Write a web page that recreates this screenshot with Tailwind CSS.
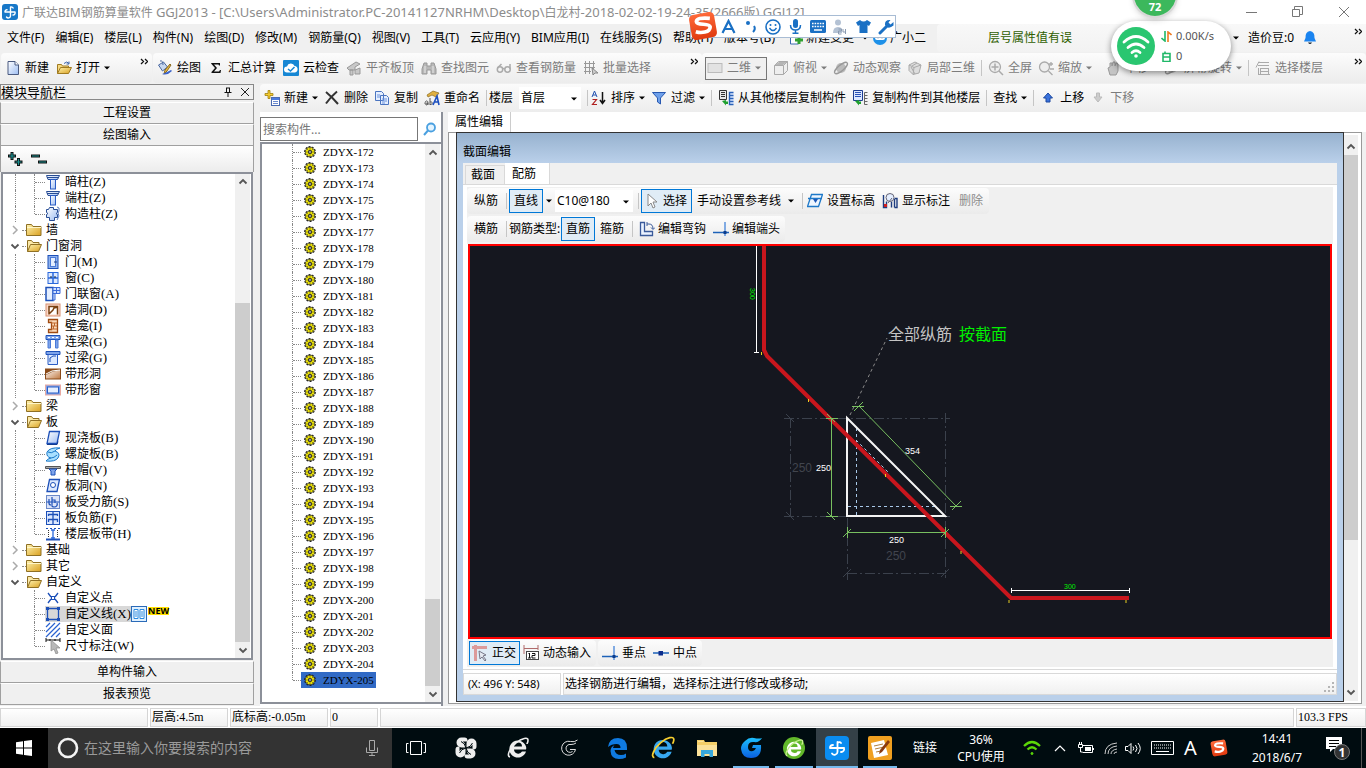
<!DOCTYPE html>
<html lang="zh-CN">
<head>
<meta charset="utf-8">
<title>广联达BIM钢筋算量软件 GGJ2013</title>
<script src="https://cdn.jsdelivr.net/npm/@tailwindcss/browser@4"></script>
</head>
<body class="h-screen flex flex-col overflow-hidden bg-[#f0f0f0] text-black text-[12px] leading-4 font-['Noto_Sans','Noto_Sans_CJK_SC',sans-serif] relative">

<svg class="absolute size-0" aria-hidden="true">
  <defs>
    <linearGradient id="gBlue" x1="0" y1="0" x2="1" y2="1"><stop offset="0" stop-color="#fff"/><stop offset="1" stop-color="#9dbdf2"/></linearGradient>
    <linearGradient id="gGold" x1="0" y1="0" x2="1" y2="1"><stop offset="0" stop-color="#fff3b0"/><stop offset="1" stop-color="#d9a020"/></linearGradient>
    <linearGradient id="gBrown" x1="0" y1="0" x2="1" y2="1"><stop offset="0" stop-color="#fff"/><stop offset="1" stop-color="#c07840"/></linearGradient>
    <linearGradient id="gRed" x1="0" y1="0" x2="0" y2="1"><stop offset="0" stop-color="#ff6a3a"/><stop offset="1" stop-color="#e03a10"/></linearGradient>
    <linearGradient id="gFlame" x1="0" y1="0" x2="0" y2="1"><stop offset="0" stop-color="#1cc0ff"/><stop offset="1" stop-color="#0a5fe0"/></linearGradient>
  </defs>
  <symbol id="app" viewBox="0 0 16 16"><rect width="16" height="16" rx="3" fill="#1878c8"/><g fill="none" stroke="#fff" stroke-width="1.4" stroke-linecap="round"><path d="M8.500 3v9a2.200 2.200 0 0 1-4 1M3 8h10M3 8a2 2 0 0 1 2-2.300M13 8a2.200 2.200 0 0 1-2 3M8.500 3.500a1.600 1.600 0 0 1 2.600.6"/></g></symbol>
  <symbol id="doc" viewBox="0 0 16 16"><path d="M3 1.5h7l3.500 3.500v9.500h-10.500z" fill="url(#gBlue)" stroke="#4a5a80"/><path d="M10 1.500v3.500h3.500" fill="#fff" stroke="#4a5a80"/></symbol>
  <symbol id="open" viewBox="0 0 16 16"><path d="M1.500 13.500v-9h4l1 1.500h6v2" fill="#f5d880" stroke="#a07a20"/><path d="M1.500 13.500l3-6h11l-3 6z" fill="url(#gGold)" stroke="#a07a20"/><path d="M8 3.500q3-3 5 0m0-2v2.500h-2.500" fill="none" stroke="#3a62a8"/></symbol>
  <symbol id="paint" viewBox="0 0 16 16"><path d="M1.500 5l5-3 4 5-5 4z" fill="#c8d8f0" stroke="#4a68a0"/><path d="M3 1q3-1 3 4" fill="none" stroke="#4a68a0"/><path d="M14 5l-4 6-3 3 1-4 5-6z" fill="#e8b840" stroke="#8a6a20"/><path d="M5 14q5 2 10-3l-1-1-6 3z" fill="#3a62c8"/></symbol>
  <symbol id="sigma" viewBox="0 0 16 16"><path d="M3 3h9v2.500h-1l-.5-1h-4.500l3 3.500-3 3.500h5l1-1.500h1l-.5 3h-9v-1l3.500-4-3.500-4z" fill="#111"/></symbol>
  <symbol id="cloud" viewBox="0 0 16 16"><rect width="16" height="16" rx="1" fill="#1787d4"/><path d="M4 12.500a3 3 0 0 1 0-6 4 4 0 0 1 7.600-.5 3.300 3.300 0 0 1 .4 6.500z" fill="#fff"/><path d="M5 9l2.500 2 4-4" fill="none" stroke="#1787d4" stroke-width="1.500"/></symbol>
  <symbol id="slab" viewBox="0 0 16 16"><path d="M1 8l9-6 4 2-5 3v3h-6zM4 10h3v5h-3zM9 10l5-2v6h-5z" fill="#c8c8c8" stroke="#999"/></symbol>
  <symbol id="binoc" viewBox="0 0 16 16"><path d="M3 3h3v3h4v-3h3l2 6v5h-5v-4h-4v4h-5v-5z" fill="#b8b8b8" stroke="#999"/><path d="M4 6v7M12 6v7" stroke="#e8e8e8"/></symbol>
  <symbol id="glass" viewBox="0 0 16 16"><g fill="none" stroke="#aaa" stroke-width="1.500"><circle cx="4" cy="9.500" r="2.700"/><circle cx="11.500" cy="9.500" r="2.700"/><path d="M6.700 9q1-1 2 0M1.500 8l4-4M14 9v-5"/></g></symbol>
  <symbol id="batch" viewBox="0 0 16 16"><path d="M1 3.500h11M1 7.500h11M1 11.500h7M2.500 1v13M6.500 1v13M10.500 1v8" stroke="#999" fill="none"/><path d="M9 8l6 5h-3l-2 2z" fill="#ccc" stroke="#888"/></symbol>
  <symbol id="plane" viewBox="0 0 16 16"><rect x="1" y="3.500" width="14" height="9" fill="#e2e2e2" stroke="#bbb"/></symbol>
  <symbol id="cube" viewBox="0 0 16 16"><path d="M1.500 5.500l4-4h9v9l-4 4h-9z" fill="#eee" stroke="#aaa"/><path d="M1.500 5.500h9v9M10.500 5.500l4-4" fill="none" stroke="#aaa"/><path d="M2 5l4-3h8l-4 3z" fill="#b5b5b5"/></symbol>
  <symbol id="orbit" viewBox="0 0 16 16"><circle cx="8" cy="8" r="5" fill="#bbb"/><ellipse cx="8" cy="8" rx="8" ry="2.800" transform="rotate(-40 8 8)" fill="none" stroke="#999" stroke-width="1.300"/></symbol>
  <symbol id="cube3" viewBox="0 0 16 16"><path d="M2 5l6-3 6 3-2 8-6 1.500-4-4z" fill="#ddd" stroke="#aaa"/><path d="M2 5l5 2.500 7-2.500M7 7.500l-1 7M4 7l4 7M10 3l-5 3" fill="none" stroke="#aaa"/></symbol>
  <symbol id="full" viewBox="0 0 16 16"><circle cx="7" cy="7" r="5.500" fill="#eee" stroke="#aaa" stroke-width="1.300"/><path d="M7 3.500v7M3.500 7h7M11 11l4 4" stroke="#aaa" stroke-width="1.500"/></symbol>
  <symbol id="zoom" viewBox="0 0 16 16"><circle cx="6.500" cy="7" r="5" fill="#eee" stroke="#aaa" stroke-width="1.300"/><path d="M10.500 11l4 4M11 4h4M13 2v4M12 9h4" stroke="#aaa" stroke-width="1.300"/></symbol>
  <symbol id="hand" viewBox="0 0 16 16"><path d="M3 8l2-1v-4h2v3l1-4h2v4l1-3h2v8l-2 4h-6z" fill="#c4c4c4" stroke="#999"/></symbol>
  <symbol id="floors" viewBox="0 0 16 16"><path d="M4 2.500h10M3 5.500h11M6 8.500h8M6 11.500h8M3 14.500h12M4 1.500l-3 6M3.500 8v7M5.500 8v7M13.500 8v7" stroke="#aaa" fill="none"/></symbol>
  <symbol id="new" viewBox="0 0 16 16"><rect x="7.500" y="7.500" width="8" height="8" fill="#fff" stroke="#4a6ab0"/><path d="M8 9h7" stroke="#4a7ae0" stroke-width="2"/><path d="M9 11.500h5M9 13.500h5" stroke="#6a8ad0"/><path d="M4 0.500h2v3h3v2h-3v3h-2v-3h-3v-2h3z" fill="#f5cc30" stroke="#a08010" stroke-width=".8"/></symbol>
  <symbol id="del" viewBox="0 0 16 16"><path d="M2 2q6 5 12 12M13 1.500q-6 5-11 12" stroke="#333" stroke-width="2" fill="none"/></symbol>
  <symbol id="copy" viewBox="0 0 16 16"><path d="M1.500 1.500h6l2 2v7h-8zM6.500 5.500h6l2 2v7h-8z" fill="#e4eeff" stroke="#4a74c0"/><path d="M8 9h5M8 11h5M8 13h3M3 5h3M3 7h3" stroke="#6a92dc"/></symbol>
  <symbol id="rename" viewBox="0 0 16 16"><path d="M3 5l6-4 6 2-3 4-4-2-4 2z" fill="#e0b040" stroke="#8a6a20" stroke-width=".7"/><path d="M1 14c0-4 3-4 3-1v2m0-2c-3 0-3 2-1 2zM6 8v7m0-3c3-1 3 3 0 2.500" stroke="#555" fill="none"/><path d="M9 15l4-9 2 9M10.500 12h4" stroke="#1d50c0" stroke-width="1.600" fill="none"/></symbol>
  <symbol id="sort" viewBox="0 0 16 16"><path d="M1 7l2.500-6 2.500 6M2 5h3" stroke="#2050b0" fill="none"/><path d="M1.500 9.500h4l-4 5h4.500" stroke="#b02020" fill="none" stroke-width="1.200"/><path d="M11.500 2v11M9 10l2.500 3.500 2.500-3.500" stroke="#111" fill="none" stroke-width="1.500"/></symbol>
  <symbol id="filter" viewBox="0 0 16 16"><path d="M1.500 2.500h13l-5 5.500v6l-3-2v-4z" fill="#6ea0ea" stroke="#2858b0"/></symbol>
  <symbol id="fcopy" viewBox="0 0 16 16"><path d="M1.500 0.500h7v9h-7z" fill="#e8e8e8" stroke="#333"/><path d="M3 2.500h4M3 4.500h4M3 6.500h4" stroke="#333"/><path d="M15.500 2.500h-4v12h4M11.500 5.500h4M11.500 8.500h4M11.500 11.500h4" stroke="#2a62b8" stroke-width="1.400" fill="#dce8ff"/><path d="M4 11l4-1v1.500h2v2.500h-2v1.500z" fill="#20a030"/></symbol>
  <symbol id="fcopy2" viewBox="0 0 16 16"><path d="M1.500 0.500h9v10h-9z" fill="#dce8ff" stroke="#1d3c90"/><path d="M3 2.500h6M3 4.500h6M3 6.500h6" stroke="#2a52b8"/><path d="M15.500 2.500h-3v12h3M12.500 5.500h3M12.500 8.500h3M12.500 11.500h3" stroke="#666" fill="none"/><path d="M3 11l4-1v1.500h2v2.500h-2v1.500z" fill="#20a030"/></symbol>
  <symbol id="up" viewBox="0 0 16 16"><path d="M8 3l4.500 5h-2.500v4h-4v-4h-2.500z" fill="#3a72dc" stroke="#1c48a0"/></symbol>
  <symbol id="down" viewBox="0 0 16 16"><path d="M8 12l4-5h-2.500v-4h-3v4h-2.500z" fill="#ccc" stroke="#bbb"/></symbol>
  <symbol id="folder" viewBox="0 0 16 14"><path d="M.5 12.500v-11h5l1.500 2h8v9z" fill="url(#gGold)" stroke="#8f7024"/><path d="M1 4.500h14" stroke="#fff6c8"/></symbol>
  <symbol id="folderO" viewBox="0 0 16 14"><path d="M1.500 12.500v-11h4l1.500 2h6v3" fill="#fbe9a8" stroke="#8f7024"/><path d="M1.500 12.500l3-7h11l-3 7z" fill="url(#gGold)" stroke="#8f7024"/></symbol>
  <symbol id="t-col" viewBox="0 0 16 16"><path d="M1.500 1.500h13l-2 4h-9.500z" fill="url(#gBlue)" stroke="#274c94"/><path d="M2 3.500h12" stroke="#274c94"/><rect x="5.500" y="5.500" width="5" height="9.500" fill="url(#gBlue)" stroke="#2a5cc4"/></symbol>
  <symbol id="t-gz" viewBox="0 0 16 16"><path d="M4.500 1.500h4v2h4v3l-1.500 1 1.500 1v3h-3v3h-5v-3h-3v-3l1.500-1-1.500-1v-3h2z" fill="url(#gBlue)" stroke="#274c94"/><path d="M12 1l2 1v3l-1 2 1 3-2 4" fill="none" stroke="#5a7cc0"/></symbol>
  <symbol id="t-door" viewBox="0 0 16 16"><rect x="3" y="1.500" width="10" height="13" fill="#8fb2ee" stroke="#1d50b8"/><rect x="5.500" y="3.500" width="5" height="9" fill="#e4eeff" stroke="#4a7ad8"/><path d="M9 8h3" stroke="#1d3c80"/></symbol>
  <symbol id="t-win" viewBox="0 0 16 16"><rect x="3" y="2.500" width="10" height="11" fill="#dce9ff" stroke="#2a68dc"/><path d="M8 2v12M3 8h10" stroke="#2a68dc" stroke-width="1.500"/><path d="M5 7h2M9 7h2" stroke="#123"/></symbol>
  <symbol id="t-dw" viewBox="0 0 16 16"><rect x="1" y="1.500" width="7" height="13" fill="#e4eeff" stroke="#1d50b8" stroke-width="1.500"/><path d="M8 1.500h7v6h-7zM11.500 1.500v6M8 4.500h7M8 8v6h2v-6" fill="#cfe0ff" stroke="#3a6ad8"/></symbol>
  <symbol id="t-wd" viewBox="0 0 16 16"><rect x="1" y="2" width="14" height="12" fill="#fbd9c8" stroke="#d89070"/><path d="M4 12.500v-8h8.500v8M4 12l4-4 1-2 4-1" fill="#fff" stroke="#7a4010" stroke-width="1.500"/></symbol>
  <symbol id="t-bk" viewBox="0 0 16 16"><path d="M3.500 1.500h9v13h-9v-3h3v-7h-3z" fill="#fbd9b8" stroke="#a04a10" stroke-width="1.300"/><path d="M6 5h6M7 8h5M6 11h6M9.500 5v3M8.500 8v3" stroke="#c06a30"/></symbol>
  <symbol id="t-ll" viewBox="0 0 16 16"><path d="M1 1.500h14v4h-14z" fill="#7ea4ea" stroke="#1d50b8"/><path d="M3 3.500h10" stroke="#fff" stroke-dasharray="2 2"/><path d="M3 6h2.500v8h-2.500zM10.500 6h2.500v8h-2.500z" fill="#7ea4ea" stroke="#4a7ad8"/></symbol>
  <symbol id="t-gl" viewBox="0 0 16 16"><path d="M1 1.500h14v3h-14z" fill="#7ea4ea" stroke="#1d50b8"/><path d="M3 4.500h9.500v10h-9.500z" fill="#dce9ff" stroke="#2a5cc4"/><path d="M5 12v-4l3-2 3 0" fill="none" stroke="#1d50b8"/></symbol>
  <symbol id="t-dd" viewBox="0 0 16 16"><rect x=".5" y="3" width="15" height="10" fill="url(#gBrown)" stroke="#8a4a18"/><path d="M1 9l6-3 8-2v-1h-14z" fill="#8a4a18"/><path d="M1 8l6-3 8-1" stroke="#fff" fill="none"/></symbol>
  <symbol id="t-dc" viewBox="0 0 16 16"><rect x=".5" y="3" width="15" height="10" fill="#7ea4ea" stroke="#e8a8a0"/><rect x="2.500" y="5" width="11" height="6" fill="#e4eeff" stroke="#2a5cc4"/></symbol>
  <symbol id="t-slab" viewBox="0 0 16 16"><path d="M4.500 1.500h10l-2.500 12h-10z" fill="url(#gBlue)" stroke="#1d50b8" stroke-width="1.300"/><path d="M2 14.500h10l1-3" stroke="#123c90" fill="none"/></symbol>
  <symbol id="t-sp" viewBox="0 0 16 16"><path d="M15 2q-4 1-5 3 6 2 3 7-3 4-12 3 1-2 5-3-5-1-4-6 3-5 13-4z" fill="#a8e0ff" stroke="#1b78c8"/><path d="M3 6q3 2 7-1M6 12q3 0 6-3" stroke="#1b78c8" fill="none"/></symbol>
  <symbol id="t-cap" viewBox="0 0 16 16"><path d="M.5 4.500h15v2h-15z" fill="#aaa" stroke="#555"/><path d="M4 7h8l-2 2v4h-4v-4z" fill="#7ea4ea" stroke="#1d50b8"/></symbol>
  <symbol id="t-hole" viewBox="0 0 16 16"><path d="M4.500 1.500h10l-2.500 12h-10z" fill="#dce9ff" stroke="#1d50b8" stroke-width="1.300"/><circle cx="8" cy="7" r="2.500" fill="#fff" stroke="#1d50b8"/></symbol>
  <symbol id="t-sl" viewBox="0 0 16 16"><rect x="1.500" y="1.500" width="13" height="13" fill="#dce4f8" stroke="#6a88c8"/><path d="M1.500 8h13M4 5v4q0 2 2 2M7 3v9q0 1 3 1 3-1 2-4M7 6h3v3" stroke="#1d50b8" fill="none" stroke-width="1.200"/></symbol>
  <symbol id="t-fj" viewBox="0 0 16 16"><rect x="1.500" y="1.500" width="13" height="13" fill="#dce9ff" stroke="#1d50b8"/><path d="M8 1.500v13M3.500 6v-1.500h9v1.500M3.500 12v-2.500h9v2.500" stroke="#1d50b8" fill="none" stroke-width="1.300"/></symbol>
  <symbol id="t-bd" viewBox="0 0 16 16"><path d="M1 2.500h14" stroke="#1d50b8" stroke-dasharray="2 2"/><path d="M1 13.500h14" stroke="#1d50b8" stroke-width="2"/><path d="M3.500 4v8M12.500 4v8" stroke="#333" stroke-dasharray="1 1"/><path d="M8 4v9M6 4h4M6 12h4" stroke="#2a68dc" stroke-width="1.300"/></symbol>
  <symbol id="t-pt" viewBox="0 0 16 16"><path d="M3 3l3 4M13 3l-3 4M3 13l3-4M13 13l-3-4" stroke="#1d50b8" stroke-width="1.300"/><rect x="6.500" y="6.500" width="3" height="3" fill="#fff" stroke="#1d50b8"/></symbol>
  <symbol id="t-ln" viewBox="0 0 16 16"><path d="M2.500 2.500h11v11h-11z" fill="none" stroke="#1d50b8" stroke-width="1.300"/><g fill="#1d50b8"><rect x="1" y="1" width="3" height="3"/><rect x="12" y="1" width="3" height="3"/><rect x="1" y="12" width="3" height="3"/><rect x="12" y="12" width="3" height="3"/></g></symbol>
  <symbol id="t-fa" viewBox="0 0 16 16"><path d="M1 5l4-4M1 10l9-9M1 15l14-14M6 15l9-9M11 15l4-4" stroke="#2a62d0" stroke-width="1.200"/></symbol>
  <symbol id="t-dim" viewBox="0 0 16 16"><path d="M1 0v4M15 0v4M1 2h14M5 1v2M10 1v2" stroke="#111"/><path d="M6 2v11l3-2 2 5 2-1-2-5h4z" fill="#b8b8b8" stroke="#888" stroke-width=".7"/></symbol>
  <symbol id="book" viewBox="0 0 16 16"><rect x=".5" y=".5" width="15" height="15" fill="#dff0ff" stroke="#2a6ab8"/><path d="M3 3.500h4v9h-4zM9 3.500h4v9h-4zM4 6h2M4 8h2M4 10h2M10 6h2M10 8h2M10 10h2" fill="#fff" stroke="#2a8ae0"/></symbol>
  <symbol id="gear" viewBox="0 0 12 12"><circle cx="6" cy="6" r="5.200" fill="none" stroke="#222" stroke-dasharray="2 1.200" stroke-width="1.400"/><circle cx="6" cy="6" r="4.700" fill="#f5ea00" stroke="#332" stroke-width=".7"/><path d="M6 1.500v9M1.500 6h9M3 3l6 6M9 3l-6 6" stroke="#443" stroke-width=".6"/><circle cx="6" cy="6" r="1.400" fill="#fff" stroke="#111"/></symbol>
  <symbol id="cursor" viewBox="0 0 16 16"><path d="M4 1v12l3-3 2 5 2-1-2-5h4z" fill="#fff" stroke="#888"/></symbol>
  <symbol id="elev" viewBox="0 0 16 16"><path d="M4.500 1.500h11l-4 12h-11zM1 5.500h14" fill="#eef6ff" stroke="#1d78c8" stroke-width="1.300"/><path d="M6 6h5l-2.500 4z" fill="#1d58b8"/></symbol>
  <symbol id="showd" viewBox="0 0 16 16"><path d="M1.500 2v12.500h3v-6M12.500 14.500v-9M9.500 14.500v-6M12.500 14.500h2.500v-9h-2" fill="none" stroke="#1d3c80" stroke-width="1.400"/><circle cx="8" cy="4.500" r="4" fill="#e4eeff" stroke="#667"/><path d="M6 10l4-5" stroke="#667"/><rect x="2" y="11" width="3" height="3" fill="#d02020"/></symbol>
  <symbol id="hook" viewBox="0 0 16 16"><path d="M1.500 1.500h4v9h8v4h-12z" fill="#eaf2ff" stroke="#3a5a9a" stroke-width="1.300"/><path d="M8 3h2q4 0 4 5M8 1v4M12 6.500l2 2 2-2" stroke="#3a5a9a" fill="none"/></symbol>
  <symbol id="perp" viewBox="0 0 16 16"><path d="M0 11.500h16" stroke="#1d62b8" stroke-width="1.500"/><path d="M12 1v14" stroke="#5a92dc" stroke-width="1.500"/><rect x="10.500" y="10" width="3" height="3" fill="#0c3c8c"/></symbol>
  <symbol id="mid" viewBox="0 0 16 16"><path d="M0 8h16" stroke="#1d62b8" stroke-width="1.500"/><rect x="5.500" y="6" width="4.500" height="4.500" fill="#0c2c8c"/></symbol>
  <symbol id="ortho" viewBox="0 0 16 16"><path d="M0 2.500h15M3.500 0v16" stroke="#dc9a9a" stroke-width="3"/><path d="M7 6l7 4-3 1 3 4-1 1-3-4-2 2z" fill="#e4e8f0" stroke="#778"/></symbol>
  <symbol id="dyn" viewBox="0 0 16 16"><path d="M1 0v9M15 0v5M1 3.500h14" stroke="#b06a6a"/><rect x="3.500" y="6.500" width="12" height="8" fill="#fff" stroke="#444"/><path d="M6.500 8v5M5.500 8.500h1M9 8.500h3v2h-3v2.500h3.500M5 13h3" stroke="#111" fill="none"/></symbol>
  <symbol id="sogou" viewBox="0 0 26 26"><g transform="rotate(-10 13 13)"><rect x="2" y="2" width="22" height="22" rx="4" fill="url(#gRed)"/><path d="M20 7.500q-11-3-12 .8c0 4 11 2.500 11 6.500-1 5-9 4-13 2" fill="none" stroke="#fff" stroke-width="3.200"/></g></symbol>
  <symbol id="chevU" viewBox="0 0 10 10"><path d="M1.500 6.500l3.500-3.500 3.500 3.500" fill="none" stroke="#555" stroke-width="1.800"/></symbol>
  <symbol id="chevD" viewBox="0 0 10 10"><path d="M1.500 3.500l3.500 3.500 3.500-3.500" fill="none" stroke="#555" stroke-width="1.800"/></symbol>
  <symbol id="chevR" viewBox="0 0 10 10"><path d="M3 1l4 4-4 4" fill="none" stroke="#aaa" stroke-width="1.500"/></symbol>
  <symbol id="caret" viewBox="0 0 6 4"><path d="M0 .5h6l-3 3z" fill="currentColor"/></symbol>
  <symbol id="more" viewBox="0 0 8 8"><path d="M1 1l2.500 2.500-2.500 2.500M5 1l2.500 2.500-2.500 2.500" fill="none" stroke="#111" stroke-width="1.300"/></symbol>
  <symbol id="ie" viewBox="0 0 24 24"><path d="M20 13.500h-12a4.300 4.300 0 0 0 8 2h4a8.500 8.500 0 1 1 .3-3.500zM8 10.500h8a4 4 0 0 0-8 0z" fill="currentColor" stroke="none"/><path d="M4 21c-4-1 0-9 6-14s12-6 12-3-1 3-1 4" fill="none" stroke-width="1.600"/></symbol>
  <symbol id="gld" viewBox="0 0 24 24"><path d="M20.500 4q-3 2.500-7 1.500a7 7 0 1 0 5 8h-5.500M19 7q-2 1.500-5 1.500a4 4 0 1 0 1.500 7" fill="none" stroke="currentColor"/></symbol>
</svg>

<header class="h-6 shrink-0 bg-white flex items-center pl-[2px] pr-4 text-[#8c8c8c]">
  <svg class="size-4 mr-1"><use href="#app"/></svg>
  <h1 class="grow whitespace-nowrap text-[12px]">广联达BIM钢筋算量软件 <span class="text-[13px]">GGJ2013 - [C:\Users\Administrator.PC-20141127NRHM\Desktop\</span>白龙村<span class="text-[13px]">-2018-02-02-19-24-35(2666</span>版<span class="text-[13px]">).GGJ12]</span></h1>
  <div class="flex gap-[34px] items-center">
    <button aria-label="最小化"><svg class="size-3" viewBox="0 0 12 12"><path d="M0 6.500h11" stroke="#777"/></svg></button>
    <button aria-label="还原"><svg class="size-3" viewBox="0 0 12 12"><path d="M.5 3.500h7v7h-7zM2.500 3v-2.500h8v8h-2.500" fill="none" stroke="#777"/></svg></button>
    <button aria-label="关闭"><svg class="size-3" viewBox="0 0 12 12"><path d="M1 1l10 10M11 1l-10 10" stroke="#777"/></svg></button>
  </div>
</header>

<div class="h-7 shrink-0 flex items-center whitespace-nowrap">
  <nav id="menu" class="w-[781px] pl-[7px] flex gap-[11px] shrink-0"></nav>
  <div class="w-[156px] pl-[7px] shrink-0 flex items-center">
    <button class="flex items-center gap-[2px]"><svg class="size-4" viewBox="0 0 16 16"><path d="M2.500 2v12h8" fill="#fff" stroke="#3a6ab0"/><path d="M11 6v8M7 10h8" stroke="#30a030" stroke-width="3"/></svg>新建变更<svg class="w-[6px] h-1 ml-[6px]"><use href="#caret"/></svg></button>
    <button class="flex items-center gap-[2px] ml-1"><svg class="size-4" viewBox="0 0 16 16"><circle cx="8" cy="8" r="7" fill="#1d90e8"/><rect x="3" y="5" width="10" height="5" rx="2" fill="#fff"/><path d="M5.500 7.500h1M9.500 7.500h1" stroke="#135" stroke-width="1.500"/></svg>广小二</button>
  </div>
  <div class="grow h-7 bg-gradient-to-b from-[#f8f8f8] to-[#f2f2f2] rounded-l flex items-center pl-[51px] pr-1">
    <span class="text-[#2f5f00] w-[245px]">层号属性值有误</span>
    <svg class="w-[6px] h-1 mr-[9px]"><use href="#caret"/></svg>
    <button class="w-[55px] text-left">造价豆:0</button>
    <svg class="size-[14px]" viewBox="0 0 14 14"><path d="M7 0q5 1 4.500 7l1.500 3.500h-12l1.500-3.500q-.5-6 4.500-7z" fill="#1a84f0"/><path d="M5 11.500h4q-2 3-4 0z" fill="#123"/></svg>
    <svg class="size-2 ml-auto mb-3"><use href="#more"/></svg>
  </div>
</div>

<div class="h-8 shrink-0 flex items-center whitespace-nowrap">
  <div id="tbFile" class="h-[30px] w-[151px] pl-1 pr-1 mx-px shrink-0 flex items-center gap-[7px] rounded bg-gradient-to-b from-[#fcfcfc] to-[#ececec]"></div>
  <div id="tbDraw" class="h-[30px] w-[549px] px-1 shrink-0 flex items-center gap-[7px] rounded bg-gradient-to-b from-[#fcfcfc] to-[#ececec]"></div>
  <div id="tbView" class="h-[30px] grow pl-[3px] pr-1 flex items-center gap-[6px] rounded bg-gradient-to-b from-[#fcfcfc] to-[#ececec] text-[#7c7c7c]"></div>
</div>

<main class="grow min-h-0 flex">
  <aside class="w-[254px] shrink-0 flex flex-col pb-px">
    <div class="h-4 mb-[2px] border border-[#888] flex items-center">
      <h2 class="grow text-[13px] whitespace-nowrap">模块导航栏</h2>
      <svg class="size-[10px] mr-2" viewBox="0 0 10 10"><path d="M3.500 1v4.500M6.500 1v4.500M3 1h4M1.500 5.500h7M5 6v4" stroke="#111" fill="none"/></svg>
      <svg class="size-2 mr-1" viewBox="0 0 8 8"><path d="M0 0l8 8M8 0l-8 8" stroke="#222"/></svg>
    </div>
    <button class="h-[22px] border border-[#a0a0a0] border-t-white">工程设置</button>
    <button class="h-[22px] border border-[#a0a0a0] border-t-white">绘图输入</button>
    <div class="h-[26px] border-x border-[#a0a0a0] bg-gradient-to-b from-white to-[#ececec] flex items-center pl-[6px] gap-2">
      <svg class="size-4" viewBox="0 0 16 16"><path d="M5 1v8M1 5h8M11.500 7v8M7.500 11h8" stroke="#111" stroke-width="3"/><path d="M5 2v6M2 5h6M11.500 8v6M8.500 11h6" stroke="#1a9090" stroke-width="1.200"/></svg>
      <svg class="size-4" viewBox="0 0 16 16"><path d="M0 5h9M7 11h9" stroke="#111" stroke-width="3"/><path d="M1 5h7M8 11h7" stroke="#1a9090" stroke-width="1.200"/></svg>
    </div>
    <div class="grow min-h-0 mx-px mb-px border-2 border-[#8c9099] bg-white flex overflow-hidden">
      <ul id="tree" class="grow overflow-hidden"></ul>
      <div class="w-[15px] mr-px shrink-0 bg-[#f0f0f0] flex flex-col items-center">
        <svg class="size-[10px] mt-[3px]"><use href="#chevU"/></svg>
        <div class="grow w-full mt-[116px] bg-[#cdcdcd]"></div>
        <svg class="size-[10px] my-[3px]"><use href="#chevD"/></svg>
      </div>
    </div>
    <button class="h-[22px] border border-[#a0a0a0] border-t-white">单构件输入</button>
    <button class="h-[22px] border border-[#a0a0a0] border-t-white">报表预览</button>
  </aside>

  <section class="grow min-w-0 ml-[6px] flex flex-col">
    <div id="tbComp" class="h-[28px] shrink-0 pl-1 flex items-center gap-[6px] whitespace-nowrap rounded-l bg-gradient-to-b from-[#fbfbfb] to-[#ededed]"></div>
    <div class="grow min-h-0 flex">
      <div class="w-[183px] shrink-0 flex flex-col pt-1 pb-[2px] bg-white border-r-2 border-[#8c9099]">
        <div class="flex items-center h-[26px]">
          <input type="text" aria-label="搜索构件" placeholder="搜索构件..." class="h-6 w-[158px] border border-[#777] bg-white px-[2px] text-[12px] placeholder:text-[#777] outline-none">
          <svg class="size-[14px] ml-[5px]" viewBox="0 0 14 14"><circle cx="8" cy="5.500" r="4" fill="#e4f4ff" stroke="#4aa0e0" stroke-width="1.800"/><path d="M5 8.500l-4 4.500" stroke="#4aa0e0" stroke-width="2"/></svg>
        </div>
        <div class="grow min-h-0 border-2 border-r-0 border-[#8c9099] flex overflow-hidden">
          <ul id="list" class="grow"></ul>
          <div class="w-[15px] mr-px shrink-0 bg-[#f0f0f0] flex flex-col items-center">
            <svg class="size-[10px] mt-1 shrink-0"><use href="#chevU"/></svg>
            <div class="w-full mt-auto h-[87px] bg-[#cdcdcd]"></div>
            <svg class="size-[10px] my-[3px] shrink-0"><use href="#chevD"/></svg>
          </div>
        </div>
      </div>

      <div class="grow min-w-0 ml-[5px] flex flex-col relative">
        <div class="h-5 shrink-0 bg-white flex"><button class="w-[63px] border-r border-[#ccc] bg-white">属性编辑</button></div>
        <div class="grow mr-1 mb-[2px] border border-[#999] bg-white p-[2px] flex justify-end">
          <div class="w-[15px] mr-px bg-[#f0f0f0] flex flex-col items-center">
            <svg class="size-[10px] mt-[7px]"><use href="#chevU"/></svg>
            <div class="w-full mt-[3px] h-[385px] bg-[#cdcdcd]"></div>
            <svg class="size-[10px] mt-auto mb-1"><use href="#chevD"/></svg>
          </div>
        </div>

        <div role="dialog" aria-label="截面编辑" class="absolute left-2 right-[22px] top-5 bottom-1 border border-[#333] flex flex-col whitespace-nowrap bg-[#bad0ea]">
          <h2 class="h-[30px] shrink-0 pt-[11px] pl-[6px] bg-gradient-to-b from-[#97b2cf] to-[#bad0ea]">截面编辑</h2>
          <div class="grow min-h-0 mx-[6px] mb-[6px] bg-[#f0f0f0] flex flex-col">
            <div class="h-[21px] flex items-end pl-[2px]">
              <button class="w-10 h-[19px] border border-b-0 border-[#d9d9d9] text-left pl-[5px]">截面</button>
              <button class="w-[45px] h-[21px] bg-white border-r border-[#d9d9d9] text-left pl-[7px]">配筋</button>
            </div>
            <div class="grow min-h-0 border-t border-[#d9d9d9] bg-white pt-[2px] px-1 pb-[2px] flex flex-col">
              <div class="bg-[#f0f0f0] flex flex-col gap-[2px] items-start pt-px pb-[2px]">
                <div class="h-[26px] w-[522px] pl-[7px] flex items-center rounded bg-gradient-to-b from-[#fcfcfc] to-[#ebebeb]">
                  <button class="w-8 text-left">纵筋</button><i class="w-px h-4 bg-[#c5c5c5] mr-[2px]"></i>
                  <button class="w-[34px] h-6 border border-[#0078d7] bg-[#e0ecf6]">直线</button>
                  <svg class="w-[6px] h-1 mx-[3px]"><use href="#caret"/></svg>
                  <div class="relative w-[78px] h-[22px] bg-white mr-[5px]"><select aria-label="配筋规格" class="appearance-none size-full px-[2px] outline-none"><option>C10@180</option></select><svg class="absolute right-1 top-[10px] w-[6px] h-1"><use href="#caret"/></svg></div>
                  <i class="w-px h-4 bg-[#c5c5c5] mr-[2px]"></i>
                  <button class="w-[51px] h-6 border border-[#0078d7] bg-[#e0ecf6] flex items-center pl-[2px] gap-[3px]"><svg class="size-4"><use href="#cursor"/></svg>选择</button>
                  <button class="ml-[5px] flex items-center gap-[7px]">手动设置参考线<svg class="w-[6px] h-1"><use href="#caret"/></svg></button>
                  <i class="w-px h-4 bg-[#c5c5c5] ml-2 mr-1"></i>
                  <button class="flex items-center gap-1"><svg class="size-4"><use href="#elev"/></svg>设置标高</button>
                  <button class="flex items-center gap-1 ml-[7px]"><svg class="size-4"><use href="#showd"/></svg>显示标注</button>
                  <button class="ml-[9px] text-[#8c8c8c]" disabled>删除</button>
                </div>
                <div class="h-[26px] w-[318px] pl-[7px] flex items-center rounded bg-gradient-to-b from-[#fcfcfc] to-[#ebebeb]">
                  <button class="w-8 text-left">横筋</button><i class="w-px h-4 bg-[#c5c5c5] mr-[2px]"></i>
                  <span class="w-[52px]">钢筋类型:</span>
                  <button class="w-[34px] h-6 border border-[#0078d7] bg-[#e0ecf6]">直筋</button>
                  <button class="w-[37px] text-left pl-[5px]">箍筋</button><i class="w-px h-4 bg-[#c5c5c5] mr-[6px]"></i>
                  <button class="flex items-center gap-[3px]"><svg class="size-4"><use href="#hook"/></svg>编辑弯钩</button>
                  <button class="flex items-center gap-[3px] ml-[7px]"><svg class="size-4"><use href="#perp"/></svg>编辑端头</button>
                </div>
              </div>
              <div class="grow min-h-0 border-2 border-[#f00] bg-[#15171f] mx-px">
                <svg class="size-full" viewBox="470 246 860 391" font-family="Liberation Sans, Noto Sans CJK SC, sans-serif">
                  <g fill="none" stroke="#3b414c" stroke-dasharray="10 3 2 3">
                    <path d="M784 418.500H950M784 516.500H950M790.500 418V517M945.500 413V578M847.500 518V580M847 573.500H946"/>
                  </g>
                  <path d="M786 414l8 8M786 512l8 8M843 577l8-8M941 577l8-8" stroke="#3b414c"/>
                  <path d="M850 415L887 338" stroke="#8a8a8a" stroke-dasharray="3 3"/>
                  <path d="M856.500 428V516M848 506.500H936M856 440L890 474" fill="none" stroke="#a8c8e8" stroke-dasharray="3 3"/>
                  <path d="M847 418V516H945z" fill="none" stroke="#f4f4f4" stroke-width="2"/>
                  <path d="M764 246V350L767 356L1011 598H1129" fill="none" stroke="#c8161d" stroke-width="4"/>
                  <g stroke="#78c060" fill="none"><path d="M831.500 418V516M826 418.500h12M826 516.500h12M827 414l8 8M827 512l8 8M847 532.500H946M847.500 527v11M945.500 527v11M843 537l8-8M941 537l8-8M859 406L956 506M852 406.500h12M950 506.500h12M854 411l9-9M952 510l9-9"/></g>
                  <g stroke="#fff" fill="none"><path d="M756.500 246V352M754 352.500h5M1011 590.500H1130M1011.500 588v5M1129.500 588v5"/></g>
                  <path d="M761.500 352v3M808.500 399v3M885.500 474v3M961 551v3M1009 600v3M1126 600v3" stroke="#e8d020"/>
                  <g font-size="9" fill="#fff"><text x="816" y="471">250</text><text x="889" y="543">250</text><text x="905" y="454">354</text></g>
                  <g font-size="12" fill="#41454e"><text x="792" y="472">250</text><text x="886" y="560">250</text></g>
                  <g font-size="7" fill="#00f000"><text x="1064" y="589">300</text><text transform="translate(750 288) rotate(90)">300</text></g>
                  <text x="888" y="340" font-size="16" fill="#c4c4c4">全部纵筋</text><text x="959" y="340" font-size="16" fill="#00f000">按截面</text>
                </svg>
              </div>
              <div class="h-[28px] shrink-0 bg-[#f0f0f0] flex items-center gap-[2px] pl-[2px]">
                <div class="h-[26px] w-[127px] flex items-center gap-[3px] rounded bg-gradient-to-b from-[#fcfcfc] to-[#ebebeb]">
                  <button class="w-[51px] h-6 border border-[#0078d7] bg-[#e0ecf6] flex items-center pl-[2px] gap-1"><svg class="size-4"><use href="#ortho"/></svg>正交</button>
                  <button class="flex items-center gap-1"><svg class="size-4"><use href="#dyn"/></svg>动态输入</button>
                </div>
                <div class="h-[26px] w-[104px] pl-1 flex items-center gap-[7px] rounded bg-gradient-to-b from-[#fcfcfc] to-[#ebebeb]">
                  <button class="flex items-center gap-1"><svg class="size-4"><use href="#perp"/></svg>垂点</button>
                  <button class="flex items-center gap-1"><svg class="size-4"><use href="#mid"/></svg>中点</button>
                </div>
              </div>
            </div>
            <div class="h-[26px] shrink-0 pt-[3px] border-t border-[#d9d9d9] bg-white flex gap-[2px]">
              <div class="w-[98px] border border-[#d9d9d9] bg-gradient-to-b from-white to-[#f0f0f0] pl-1 pt-[2px] text-[11px]">(X: 496 Y: 548)</div>
              <div class="grow border border-[#d9d9d9] bg-gradient-to-b from-white to-[#f0f0f0] pl-px pt-[2px] flex justify-between">选择钢筋进行编辑，选择标注进行修改或移动;
                <svg class="size-3 mt-[6px]" viewBox="0 0 12 12" fill="#b5b5b5"><path d="M8 0h2v2h-2zM4 4h2v2h-2zM8 4h2v2h-2zM0 8h2v2h-2zM4 8h2v2h-2zM8 8h2v2h-2z"/></svg>
              </div>
            </div>
          </div>
        </div>
      </div>
    </div>
  </section>
</main>

<footer class="h-[22px] shrink-0 bg-white pt-[2px] pb-px flex gap-[2px] whitespace-nowrap font-['Liberation_Serif','Noto_Sans_CJK_SC',serif]">
  <div class="w-[148px] border border-[#d5d5d5] bg-gradient-to-b from-white to-[#f0f0f0]"></div>
  <div class="w-[78px] border border-[#d5d5d5] bg-gradient-to-b from-white to-[#f0f0f0] pl-px">层高:4.5m</div>
  <div class="w-[98px] border border-[#d5d5d5] bg-gradient-to-b from-white to-[#f0f0f0] pl-px">底标高:-0.05m</div>
  <div class="w-[48px] border border-[#d5d5d5] bg-gradient-to-b from-white to-[#f0f0f0] pl-px">0</div>
  <div class="grow border border-[#d5d5d5] bg-gradient-to-b from-white to-[#f0f0f0]"></div>
  <div class="w-[70px] border border-[#d5d5d5] bg-gradient-to-b from-white to-[#f0f0f0] pl-px">103.3 FPS</div>
</footer>

<div class="h-10 shrink-0 bg-[#000c10] text-white flex items-center whitespace-nowrap">
  <button aria-label="开始" class="w-12 h-10 bg-black flex items-center justify-center"><svg class="size-4" viewBox="0 0 16 16" fill="#fff"><path d="M0 2.300l7-1v6.200h-7zM8 1.100l8-1.100v7.500h-8zM0 8.500h7v6.200l-7-1zM8 8.500h8v7.500l-8-1.100z"/></svg></button>
  <label class="w-[344px] h-10 bg-[#333] flex items-center pl-[9px] pr-[14px]">
    <svg class="size-[22px] mr-[5px] shrink-0" viewBox="0 0 22 22"><circle cx="11" cy="11" r="9" fill="none" stroke="#f4f4f4" stroke-width="2.600"/></svg>
    <input type="text" aria-label="搜索" placeholder="在这里输入你要搜索的内容" class="grow min-w-0 bg-transparent text-[14px] placeholder:text-[#9a9a9a] outline-none">
    <svg class="w-3 h-4" viewBox="0 0 12 16" fill="none" stroke="#aaa"><path d="M3.500 .5h5v10h-5zM.5 7.500v5h11v-5M6 13v3M3 15.500h6"/></svg>
  </label>
  <button aria-label="任务视图" class="w-12 h-10 flex items-center justify-center"><svg class="w-5 h-4" viewBox="0 0 20 16" fill="none" stroke="#fff"><path d="M4.500 1.500h11v13h-11zM2.500 3.500h-2v9h2M17.500 3.500h2v9h-2"/></svg></button>
  <button aria-label="360" class="w-[52px] flex justify-center"><svg class="size-[22px]" viewBox="0 0 22 22"><g fill="#eee"><path id="petal" d="M10.500 10.500h-4a5 5 0 0 1 0-10h3q3 0 3 3v1h-5q3 1 3 6z"/><use href="#petal" transform="rotate(90 11 11)"/><use href="#petal" transform="rotate(180 11 11)"/><use href="#petal" transform="rotate(270 11 11)"/></g><path d="M11 11q-1-5-5-6.500M11 11q5-1 6.500-5M11 11q1 5 5 6.500M11 11q-5 1-6.500 5" fill="none" stroke="#000c10"/></svg></button>
  <button aria-label="浏览器" class="w-[51px] flex justify-center text-[#eee]"><svg class="size-6 stroke-[#eee]"><use href="#ie"/></svg></button>
  <button aria-label="广联达" class="w-[51px] flex justify-center text-[#ddd]"><svg class="size-6"><use href="#gld"/></svg></button>
  <button aria-label="Edge" class="w-[48px] flex justify-center"><svg class="size-[22px]" viewBox="0 0 22 22"><path d="M1 10q1-9 10-9 9 0 9 10v2h-12.500q1 5 6.500 5 3 0 5-1.500v4q-3 1.500-7 1.500-8 0-8.500-8 0-4 4-6-1 1-1.500 3h7.500q0-4-4-4-5 0-8.500 3z" fill="#0f7ae0"/></svg></button>
  <button aria-label="Internet Explorer" class="w-[42px] flex justify-center text-[#38a8f0]"><svg class="size-[26px] stroke-[#f8d030]"><use href="#ie"/></svg></button>
  <button aria-label="文件资源管理器" class="w-[46px] flex justify-center"><svg class="size-[22px]" viewBox="0 0 22 22"><path d="M1 3h7l1 2h12v14h-20z" fill="#f5cf68"/><path d="M2 4h5l1 1h-6zM1 8h20v11h-20z" fill="#fce29a"/><path d="M5 20v-7h12v7h-3.500v-3h-5v3z" fill="#38a8dc"/></svg></button>
  <button aria-label="广联达云" class="w-[36px] h-10 pt-[2px] mx-[3px] border-b-2 border-[#76b9ed] flex items-center justify-center"><svg class="size-6" viewBox="0 0 24 24"><path d="M23 2q-3 5-8 4-6-.5-6 5 0 5 5 4 2-.5 3-3h-4l1-3h8q1 13-10 13-9 0-10-9 0-5 4-8 4-4 9-3 5 1 8 0z" fill="url(#gFlame)"/></svg></button>
  <button aria-label="360浏览器" class="w-[38px] h-10 pt-[2px] mx-[3px] border-b-2 border-[#76b9ed] flex items-center justify-center text-white"><svg class="size-6" viewBox="0 0 24 24"><circle cx="12" cy="12" r="11" fill="#62b82a"/><g transform="translate(2 2) scale(.85)" stroke="#c8f090"><use href="#ie" width="24" height="24"/></g></svg></button>
  <button aria-label="GGJ2013" class="w-[42px] h-10 pt-[2px] border-b-2 border-[#76b9ed] bg-[#344047] flex items-center justify-center"><svg class="size-6" viewBox="0 0 24 24"><rect width="24" height="24" rx="4" fill="#0a8cf0"/><path d="M12.500 6v10a3 3 0 0 1-5.500 1.500M5 12h14M5 12a3 3 0 0 1 3-3M19 12a3 3 0 0 1-3 4M12.500 7.500a2 2 0 0 1 3.500-.5" fill="none" stroke="#fff" stroke-width="1.800" stroke-linecap="round"/></svg></button>
  <button aria-label="便笺" class="w-[34px] h-10 pt-[2px] mx-[5px] border-b-2 border-[#76b9ed] flex items-center justify-center"><svg class="size-6" viewBox="0 0 24 24"><rect width="24" height="24" rx="2" fill="#f0a020"/><path d="M3 7l13-3 4 15-14 3z" fill="#fff"/><path d="M6 10l9-2M7 13l9-2M8 16l5-1" stroke="#b08040"/><path d="M20 4l-8 10-1 4 3-2 8-10z" fill="#8a3a10"/></svg></button>
  <span class="w-[52px] pl-[11px]">链接</span>
  <div class="w-[54px] text-center text-[12px] leading-[17px]">36%<br>CPU使用</div>
  <div class="grow flex items-center justify-end">
    <svg class="w-[18px] h-4 mr-[13px]" viewBox="0 0 18 16" fill="none" stroke="#5cd808" stroke-width="2.200"><path d="M1 6q8-8 16 0M4.500 9.500q4.500-4.500 9 0"/><circle cx="9" cy="13.500" r="1" fill="#5cd808" stroke-width="1"/></svg>
    <svg class="w-3 h-2 mr-3" viewBox="0 0 12 8"><path d="M1 7l5-5 5 5" fill="none" stroke="#fff" stroke-width="1.200"/></svg>
    <svg class="w-4 h-3 mr-[10px]" viewBox="0 0 16 12"><path d="M5 3.500h9.500v7h-10M.5 2.500h4v3h-4zM1.500 0v2M3.500 0v2M2.500 6v4h2M15.500 6v2" fill="none" stroke="#fff"/><path d="M7 5h6v4h-6z" fill="#fff"/></svg>
    <svg class="size-[13px] mr-2" viewBox="0 0 13 13" fill="none" stroke="#ccc"><path d="M1 12q0-10 12-11M4 12q0-7 9-8M7 12q0-4 6-5M10 12q0-2 3-2"/></svg>
    <svg class="w-[17px] h-[13px] mr-[9px]" viewBox="0 0 17 13" fill="none" stroke="#fff"><path d="M.5 4.500h2.500l3-3v10l-3-3h-2.500zM8 4.500q1.500 2 0 4M10.500 3q3 3.500 0 7M13 1q4.500 5.500 0 11"/></svg>
    <svg class="w-[23px] h-[14px] mr-[10px]" viewBox="0 0 23 14"><path d="M.5 .5h22v13h-22z" fill="none" stroke="#fff"/><path d="M3 4h17M3 7h17" stroke="#fff" stroke-dasharray="1 1"/><path d="M5 10.500h13" stroke="#fff"/></svg>
    <span class="text-[20px] leading-5 w-[26px]">A</span>
    <svg class="size-[18px] mr-[19px]"><use href="#sogou"/></svg>
    <div class="w-[60px] text-center leading-[19px]">14:41<br>2018/6/7</div>
    <svg class="w-[26px] h-6 ml-[18px] mr-[10px]" viewBox="0 0 26 24"><path d="M1 1h16v12h-9l-3 3v-3h-4z" fill="#fff"/><path d="M4 4.500h10M4 7.500h10M4 10.500h7" stroke="#000"/><circle cx="17" cy="16" r="7.500" fill="#333" stroke="#777"/><text x="17" y="20.500" text-anchor="middle" font-size="12" fill="#fff" font-weight="bold">1</text></svg>
    <i class="w-px h-10 bg-[#555] mr-1"></i>
  </div>
</div>

<!-- Input-method bar floating over the window -->
<div class="absolute left-[690px] top-[15px] w-[206px] h-[23px] bg-white border border-[#a8bcd4] flex items-center gap-[7px] pl-[30px] text-[#1a70c4]">
  <svg class="absolute -left-[3px] -top-[5px] size-[30px]"><use href="#sogou"/></svg>
  <svg class="size-[15px]" viewBox="0 0 15 15"><path d="M1.500 14l6-12 6 12M4 10h7" fill="none" stroke="currentColor" stroke-width="2.200"/></svg>
  <svg class="size-[15px]" viewBox="0 0 15 15"><circle cx="5" cy="4" r="2" fill="currentColor"/><path d="M11 7q2 3-1 6" fill="none" stroke="currentColor" stroke-width="2"/></svg>
  <svg class="size-4" viewBox="0 0 16 16"><circle cx="8" cy="8" r="7" fill="none" stroke="currentColor" stroke-width="1.600"/><path d="M4.500 9q3.500 5 7 0" fill="none" stroke="currentColor" stroke-width="1.400"/><circle cx="5.500" cy="6" r="1" fill="currentColor"/><circle cx="10.500" cy="6" r="1" fill="currentColor"/></svg>
  <svg class="size-[15px]" viewBox="0 0 15 15"><rect x="5" y="0" width="5" height="9" rx="2.500" fill="currentColor"/><path d="M2.500 6q0 5 5 5t5-5M7.500 11v3M4.500 14.200h6" fill="none" stroke="currentColor" stroke-width="1.500"/></svg>
  <svg class="w-4 h-[13px]" viewBox="0 0 16 13"><rect width="16" height="13" rx="1.500" fill="currentColor"/><path d="M2 3.500h12M2 6.500h12" stroke="#fff" stroke-width="1.500" stroke-dasharray="1.600 1"/><path d="M4 10h8" stroke="#fff" stroke-width="1.500"/></svg>
  <svg class="size-4" viewBox="0 0 16 16"><circle cx="5" cy="3.500" r="3" fill="#b4c2d4"/><path d="M0 14q0-6 5-6 3 0 4 2v4z" fill="#b4c2d4"/><path d="M5.500 10h3v2h-3v3h3M10 10v3h2M12.500 10v5" stroke="#8a9ab0" fill="none"/></svg>
  <svg class="size-[15px]" viewBox="0 0 15 15"><path d="M4 1q3.500 3 7 0l4 2.500-2 3.500-1.500-1v8h-8v-8l-1.500 1-2-3.500z" fill="currentColor"/></svg>
  <svg class="size-4" viewBox="0 0 16 16"><path d="M2 14l7-7" stroke="currentColor" stroke-width="3" stroke-linecap="round"/><path d="M12.500 1q-6-.5-5.500 5 3 5 8.500 .5v-3.500l-3 2.500-2-2z" fill="currentColor"/></svg>
</div>

<!-- Network speed widget -->
<div class="absolute left-[1111px] top-[21px] w-[120px] h-[50px] rounded-full bg-white shadow-[0_2px_6px_rgba(0,0,0,0.45)] flex items-center pl-[6px] text-[#555] text-[11px]">
  <svg class="size-[38px] mr-[6px]" viewBox="0 0 38 38"><circle cx="19" cy="19" r="19" fill="#2ac670"/><g fill="none" stroke="#fff" stroke-width="2.800" stroke-linecap="round"><path d="M7 15q12-11 24 0M11 20.500q8-7 16 0M15 25.500q4-3.500 8 0"/></g><circle cx="19" cy="29" r="1.800" fill="#fff"/></svg>
  <div class="flex flex-col gap-1">
    <div class="flex items-center gap-1"><svg class="size-[11px]" viewBox="0 0 11 11"><path d="M4 0v10l-3.500-3" fill="none" stroke="#20b868" stroke-width="1.600"/><path d="M7 11v-10l3.500 3" fill="none" stroke="#f07a20" stroke-width="1.600"/></svg>0.00K/s</div>
    <div class="flex items-center gap-1"><svg class="size-[11px]" viewBox="0 0 11 11"><path d="M2 2.500h7v8h-7zM2 6h7M4 .5v2" fill="none" stroke="#20b868" stroke-width="1.600"/></svg>0</div>
  </div>
</div>
<div class="absolute left-[1132px] -top-[28px] size-[46px] rounded-full border-2 border-[#d8d8d8] bg-[#3cb85c] shadow-md flex items-end justify-center pb-[1px] text-white font-bold text-[11px]">72</div>

<script>
const use = (id, cls) => `<svg class="${cls}"><use href="#${id}"/></svg>`;
const caret = use('caret', 'w-[6px] h-1');
const sep = '<i class="w-px h-4 bg-[#c5c5c5]"></i>';
const btn = (icon, text, off, drop) =>
  `<button class="flex items-center gap-1 shrink-0 ${off ? 'text-[#7c7c7c]' : ''}">${icon ? use(icon, 'size-4') : ''}${text}${drop ? caret : ''}</button>`;
const more = use('more', 'size-2 ml-auto mb-3 shrink-0');
const put = (id, html) => document.getElementById(id).innerHTML = html;

put('menu', ['文件(F)','编辑(E)','楼层(L)','构件(N)','绘图(D)','修改(M)','钢筋量(Q)','视图(V)','工具(T)','云应用(Y)','BIM应用(I)','在线服务(S)','帮助(H)','版本号(B)']
  .map(t => `<button>${t}</button>`).join(''));
put('tbFile', btn('doc','新建') + btn('open','打开',0,1) + more);
put('tbDraw', btn('paint','绘图') + btn('sigma','汇总计算') + btn('cloud','云检查') + btn('slab','平齐板顶',1) + btn('binoc','查找图元',1) + btn('glass','查看钢筋量',1) + btn('batch','批量选择',1) + more);
put('tbView', `<button class="h-[23px] w-[62px] shrink-0 border border-[#777] bg-[#f0f0f0] flex items-center gap-1 pl-[1px]">${use('plane','size-4')}二维${caret}</button>`
  + btn('cube','俯视',1,1) + btn('orbit','动态观察',1) + btn('cube3','局部三维',1) + sep + btn('full','全屏',1) + btn('zoom','缩放',1,1) + '<span class="w-px"></span>' + btn('hand','平移',1) + '<span class="w-[3px]"></span>' + btn('orbit','屏幕旋转',1,1) + sep + btn('floors','选择楼层',1) + more);
put('tbComp', btn('new','新建',0,1) + btn('del','删除') + btn('copy','复制') + btn('rename','重命名') +
  `<div class="flex items-center gap-[2px]">${sep}<label for="floor" class="mr-1">楼层</label><div class="relative w-[62px] h-[22px] bg-white"><select id="floor" class="appearance-none size-full px-[2px] outline-none"><option>首层</option></select><svg class="absolute right-1 top-[10px] w-[6px] h-1"><use href="#caret"/></svg></div></div>`
  + `<div class="flex items-center gap-[3px]">${sep}${btn('sort','排序',0,1)}</div>` + btn('filter','过滤',0,1) + sep + btn('fcopy','从其他楼层复制构件') + btn('fcopy2','复制构件到其他楼层') + sep + btn('','查找',0,1) + sep + btn('up','上移') + btn('down','下移',1));

const tree = [
  ['t-col','暗柱(Z)'],['t-col','端柱(Z)'],['t-gz','构造柱(Z)'],['+','墙'],['-','门窗洞'],['t-door','门(M)'],['t-win','窗(C)'],['t-dw','门联窗(A)'],['t-wd','墙洞(D)'],['t-bk','壁龛(I)'],['t-ll','连梁(G)'],['t-gl','过梁(G)'],['t-dd','带形洞'],['t-dc','带形窗'],['+','梁'],['-','板'],['t-slab','现浇板(B)'],['t-sp','螺旋板(B)'],['t-cap','柱帽(V)'],['t-hole','板洞(N)'],['t-sl','板受力筋(S)'],['t-fj','板负筋(F)'],['t-bd','楼层板带(H)'],['+','基础'],['+','其它'],['-','自定义'],['t-pt','自定义点'],['t-ln','自定义线(X)'],['t-fa','自定义面'],['t-dim','尺寸标注(W)']];
const latin = t => t.replace(/\((.)\)/, `<span class="font-['Liberation_Serif',serif] text-[13px]">($1)</span>`);
put('tree', tree.map(([k, t], i) => {
  if (k === '+' || k === '-')
    return `<li class="h-4 flex items-center pl-[7px] whitespace-nowrap">${use(k === '+' ? 'chevR' : 'chevD', 'size-[10px] mr-[2px]')}<i class="w-1 border-t border-dotted border-[#888]"></i>${use(k === '+' ? 'folder' : 'folderO', 'w-4 h-[14px] mr-1')}${t}</li>`;
  const last = !tree[i + 1] || '+-'.includes(tree[i + 1][0]);
  return `<li class="h-4 flex items-center pl-[12px] whitespace-nowrap"><i class="h-4 w-[19px] shrink-0 ${i < 25 ? 'border-l border-dotted border-[#888]' : ''}"></i><i class="w-px h-4 shrink-0"><i class="block border-l border-dotted border-[#888] ${last ? 'h-2' : 'h-4'}"></i></i><i class="w-[10px] shrink-0 border-t border-dotted border-[#888]"></i><span class="h-4 flex items-center ${k === 't-ln' ? 'bg-[#d8d8d8]' : ''}">${use(k, 'size-4 mr-1')}<span>${latin(t)}</span></span>${k === 't-ln' ? use('book', 'size-4 shrink-0') + '<b class="ml-[1px] mb-[6px] leading-[7px] h-[8px] bg-[#ffe000] text-[9px]">NEW</b>' : ''}</li>`;
}).join(''));

put('list', Array.from({length: 34}, (_, i) => {
  const n = 172 + i, on = n === 205;
  return `<li class="h-4 flex items-center pl-[30px] whitespace-nowrap"><i class="w-px h-4"><i class="block border-l border-dotted border-[#888] ${on ? 'h-2' : 'h-4'}"></i></i><i class="w-[8px] border-t border-dotted border-[#888]"></i><span class="h-4 flex items-center pl-[3px] w-[75px] gap-[7px] font-['Liberation_Serif',serif] text-[11px] ${on ? 'bg-[#316ac5]' : ''}">${use('gear', 'size-3')}ZDYX-${n}</span></li>`;
}).join(''));
</script>
</body>
</html>
